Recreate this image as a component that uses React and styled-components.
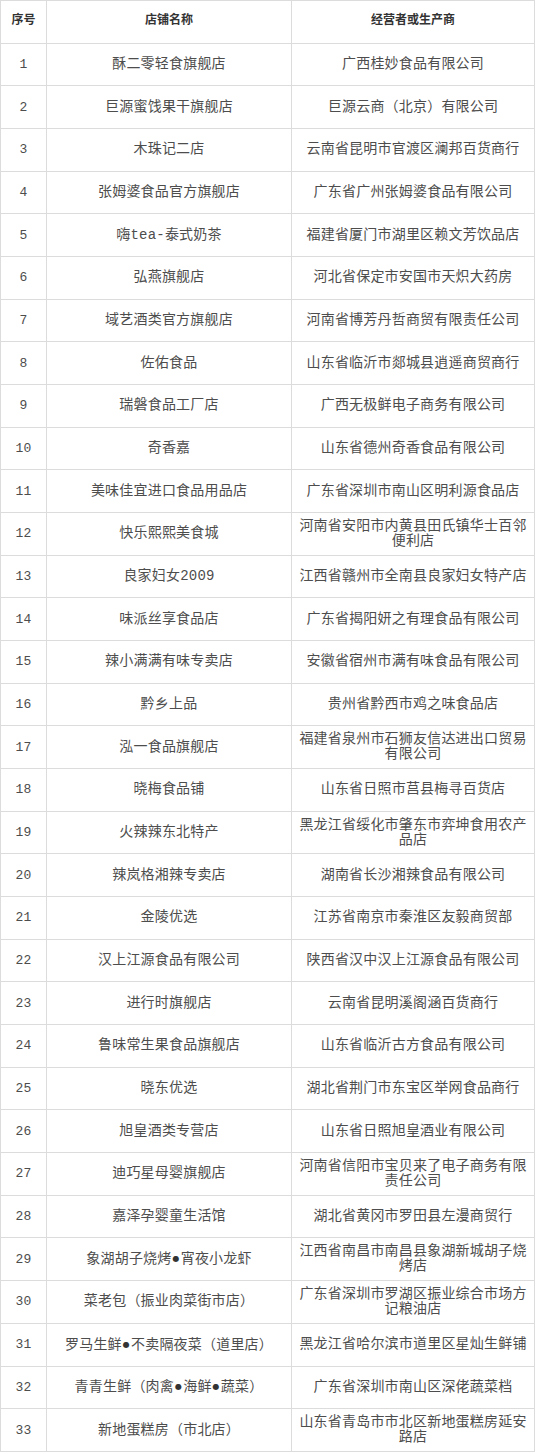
import React from "react";
import styled, { createGlobalStyle } from "styled-components";

const rows = [
  ["酥二零轻食旗舰店", "广西桂妙食品有限公司"],
  ["巨源蜜饯果干旗舰店", "巨源云商（北京）有限公司"],
  ["木珠记二店", "云南省昆明市官渡区澜邦百货商行"],
  ["张姆婆食品官方旗舰店", "广东省广州张姆婆食品有限公司"],
  ["嗨tea-泰式奶茶", "福建省厦门市湖里区赖文芳饮品店"],
  ["弘燕旗舰店", "河北省保定市安国市天炽大药房"],
  ["域艺酒类官方旗舰店", "河南省博芳丹哲商贸有限责任公司"],
  ["佐佑食品", "山东省临沂市郯城县逍遥商贸商行"],
  ["瑞磐食品工厂店", "广西无极鲜电子商务有限公司"],
  ["奇香嘉", "山东省德州奇香食品有限公司"],
  ["美味佳宜进口食品用品店", "广东省深圳市南山区明利源食品店"],
  ["快乐熙熙美食城", "河南省安阳市内黄县田氏镇华士百邻便利店"],
  ["良家妇女2009", "江西省赣州市全南县良家妇女特产店"],
  ["味派丝享食品店", "广东省揭阳妍之有理食品有限公司"],
  ["辣小满满有味专卖店", "安徽省宿州市满有味食品有限公司"],
  ["黔乡上品", "贵州省黔西市鸡之味食品店"],
  ["泓一食品旗舰店", "福建省泉州市石狮友信达进出口贸易有限公司"],
  ["晓梅食品铺", "山东省日照市莒县梅寻百货店"],
  ["火辣辣东北特产", "黑龙江省绥化市肇东市弈坤食用农产品店"],
  ["辣岚格湘辣专卖店", "湖南省长沙湘辣食品有限公司"],
  ["金陵优选", "江苏省南京市秦淮区友毅商贸部"],
  ["汉上江源食品有限公司", "陕西省汉中汉上江源食品有限公司"],
  ["进行时旗舰店", "云南省昆明溪阁涵百货商行"],
  ["鲁味常生果食品旗舰店", "山东省临沂古方食品有限公司"],
  ["晓东优选", "湖北省荆门市东宝区举网食品商行"],
  ["旭皇酒类专营店", "山东省日照旭皇酒业有限公司"],
  ["迪巧星母婴旗舰店", "河南省信阳市宝贝来了电子商务有限责任公司"],
  ["嘉泽孕婴童生活馆", "湖北省黄冈市罗田县左漫商贸行"],
  ["象湖胡子烧烤●宵夜小龙虾", "江西省南昌市南昌县象湖新城胡子烧烤店"],
  ["菜老包（振业肉菜街市店）", "广东省深圳市罗湖区振业综合市场方记粮油店"],
  ["罗马生鲜●不卖隔夜菜（道里店）", "黑龙江省哈尔滨市道里区星灿生鲜铺"],
  ["青青生鲜（肉禽●海鲜●蔬菜）", "广东省深圳市南山区深佬蔬菜档"],
  ["新地蛋糕房（市北店）", "山东省青岛市市北区新地蛋糕房延安路店"],
];

// split on the bullet so it can be drawn smaller than the CJK text
const withDots = (text) =>
  text.split("●").map((part, i) => (
    <React.Fragment key={i}>
      {i > 0 && <Dot>●</Dot>}
      {part}
    </React.Fragment>
  ));

const App = () => {
  return (
    <>
      <GlobalStyle />
      <Table>
        <colgroup>
          <col style={{ width: 46 }} />
          <col style={{ width: 245 }} />
          <col />
        </colgroup>
        <thead>
          <Row>
            <Head>序号</Head>
            <Head>店铺名称</Head>
            <Head>经营者或生产商</Head>
          </Row>
        </thead>
        <tbody>
          {rows.map(([shop, owner], id) => (
            <Row key={id}>
              <Num>{id + 1}</Num>
              <Cell>{withDots(shop)}</Cell>
              <Cell>{owner}</Cell>
            </Row>
          ))}
        </tbody>
      </Table>
    </>
  );
};

export default App;

const GlobalStyle = createGlobalStyle`
  body {
    margin: 0;
    background: #fff;
  }
`;

const Table = styled.table`
  width: 535px;
  border-collapse: collapse;
  table-layout: fixed;
  font-family: "Liberation Mono", "Noto Sans CJK SC", monospace;
  color: #4d4d4d;
`;

const Row = styled.tr`
  height: 42.68px;
`;

const Cell = styled.td`
  border: 1px solid #dcdcdc;
  padding: 0 7px;
  text-align: center;
  vertical-align: middle;
  font-size: 14px;
  line-height: 15px;
  letter-spacing: 0.2px;
`;

const Head = styled(Cell).attrs({ as: "th" })`
  font-size: 12px;
  font-weight: 700;
  color: #333;
  letter-spacing: 0;
`;

const Num = styled(Cell)`
  padding: 0;
  font-size: 13px;
`;

const Dot = styled.span`
  font-family: "DejaVu Sans", sans-serif;
  font-size: 8px;
  color: #333;
  margin: 0 1px;
  vertical-align: 2px;
`;
